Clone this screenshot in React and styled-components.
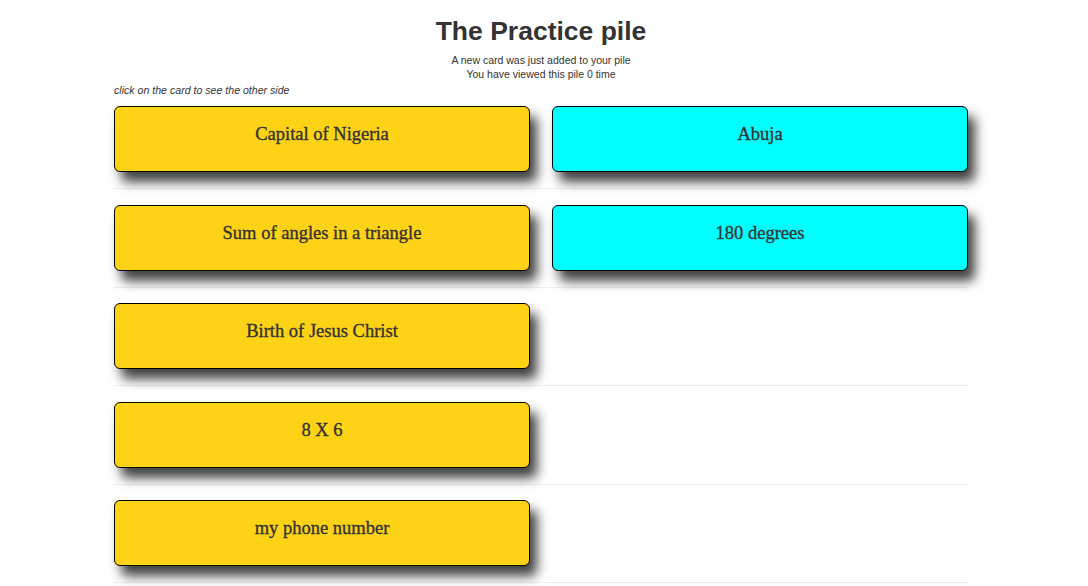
import React from "react";
import styled, { createGlobalStyle } from "styled-components";

const GlobalStyle = createGlobalStyle`
  html, body {
    margin: 0;
    padding: 0;
    background: #fff;
  }
  body {
    font-family: "Liberation Sans", Arial, sans-serif;
    color: #333;
  }
`;

const Page = styled.div`
  width: 854px;
  margin-left: 114px;
  padding-top: 15px;
`;

const Header = styled.header`
  text-align: center;
`;

const Title = styled.h1`
  margin: 0;
  font-size: 26.5px;
  line-height: 32px;
  font-weight: bold;
  color: #333;
`;

const Note = styled.p`
  margin: 0;
  font-size: 10.5px;
  line-height: 14px;
  color: #333;
`;

const Notes = styled.div`
  margin-top: 6px;
`;

const Hint = styled.p`
  margin: 2px 0 9px;
  font-size: 10.6px;
  line-height: 14px;
  font-style: italic;
  color: #333;
`;

const Row = styled.div`
  display: grid;
  grid-template-columns: 416px 416px;
  column-gap: 22px;
  padding-bottom: 16px;
  margin-bottom: 15.5px;
  border-bottom: 1px solid #eee;
`;

const Card = styled.div`
  box-sizing: border-box;
  height: 66px;
  padding-top: 16px;
  border: 1px solid #000;
  border-radius: 6px;
  background: ${(p) => (p.$back ? "#00ffff" : "#fed215")};
  box-shadow: 7px 10px 12px rgba(0, 0, 0, 0.75);
  text-align: center;
  font-family: "Liberation Serif", "Times New Roman", serif;
  font-size: 18.5px;
  line-height: 22px;
  -webkit-text-stroke: 0.35px #333;
  color: #333;
  cursor: pointer;
`;

const cards = [
  { front: "Capital of Nigeria", back: "Abuja" },
  { front: "Sum of angles in a triangle", back: "180 degrees" },
  { front: "Birth of Jesus Christ" },
  { front: "8 X 6" },
  { front: "my phone number" },
];

export default function App() {
  return (
    <>
      <GlobalStyle />
      <Page>
        <Header>
          <Title>The Practice pile</Title>
          <Notes>
            <Note>A new card was just added to your pile</Note>
            <Note>You have viewed this pile 0 time</Note>
          </Notes>
        </Header>
        <Hint>click on the card to see the other side</Hint>
        {cards.map((c) => (
          <Row key={c.front}>
            <Card>{c.front}</Card>
            {c.back && <Card $back>{c.back}</Card>}
          </Row>
        ))}
      </Page>
    </>
  );
}
